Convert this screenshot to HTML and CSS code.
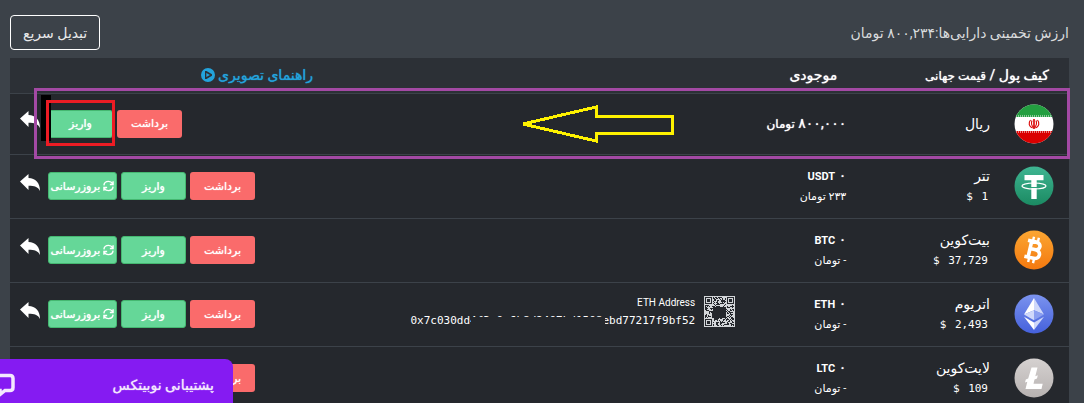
FILE: index.html
```html
<!DOCTYPE html>
<html lang="fa" dir="rtl">
<head>
    <meta charset="UTF-8">
    <meta name="viewport" content="width=device-width, initial-scale=1.0">
    <title>کیف پول</title>
    <link rel="stylesheet" href="styles.css">
</head>
<body>
    <!-- Shared icons -->
    <svg class="sprite" aria-hidden="true">
        <symbol id="reply" viewBox="0 0 20 17">
            <path d="M0 7.500 8.500 0v4C15.500 4.300 20 8.500 20 17c-2.200-4.200-5.500-5.200-11.500-5.200V16z"/>
        </symbol>
        <symbol id="refresh" viewBox="0 0 12 12">
            <path d="M1 5.300C1.300 2.700 3.300 1 6 1c2 0 3.500.8 4.600 2.500M11 .8v3.500H7.500M11 6.700C10.700 9.300 8.700 11 6 11c-2 0-3.500-.8-4.600-2.500M1 11.200V7.700h3.500" fill="none" stroke="currentColor" stroke-width="1.500"/>
        </symbol>
    </svg>

    <header class="topbar">
        <p class="estimate">ارزش تخمینی دارایی‌ها:۸۰۰,۲۳۴ تومان</p>
        <button class="convert" type="button">تبدیل سریع</button>
    </header>

    <main class="wallets">
        <table class="wallet-table">
            <colgroup>
                <col class="col-coin">
                <col class="col-balance">
                <col class="col-address">
                <col class="col-actions">
            </colgroup>
            <thead>
                <tr>
                    <th>کیف پول / <small>قیمت جهانی</small></th>
                    <th>موجودی</th>
                    <th></th>
                    <th>
                        <a class="guide" href="#">راهنمای تصویری
                            <svg class="play" viewBox="0 0 14 14"><path fill-rule="evenodd" d="M7 0a7 7 0 1 0 0 14A7 7 0 0 0 7 0zM4 3h1.500L11 6.200v1.600L5.500 11H4z"/><path d="M5.300 5v4L9 7z"/></svg>
                        </a>
                    </th>
                </tr>
            </thead>
            <tbody>
                <tr class="rial">
                    <td>
                        <div class="coin">
                            <svg class="coin-icon" viewBox="0 0 40 40">
                                <clipPath id="round"><circle cx="20" cy="20" r="19.500"/></clipPath>
                                <g clip-path="url(#round)">
                                    <path fill="#fff" d="M0 0h40v40H0z"/>
                                    <path fill="#239f40" d="M0 0h40v13H0z"/>
                                    <path fill="#da0000" d="M0 27h40v13H0z"/>
                                    <path stroke="#8ccb9b" stroke-width="2" stroke-dasharray="1 1" d="M0 12h40"/>
                                    <path stroke="#ea8080" stroke-width="2" stroke-dasharray="1 1" d="M0 28h40"/>
                                </g>
                                <path d="M20 15v10" stroke="#da0000" stroke-width="1.600"/>
                                <path d="M16.500 16c-2.500 3-1.500 6.500 2 8M23.500 16c2.500 3 1.500 6.500-2 8M18 16.500c-1 2.500-.5 5 1.500 7M22 16.500c1 2.500.5 5-1.500 7" fill="none" stroke="#da0000" stroke-width="1.100"/>
                            </svg>
                            <div class="name">ریال</div>
                        </div>
                    </td>
                    <td><div class="amount">۸۰۰,۰۰۰ <small>تومان</small></div></td>
                    <td></td>
                    <td>
                        <div class="actions">
                            <button class="btn withdraw" type="button">برداشت</button>
                            <button class="btn deposit" type="button">واریز</button>
                            <a class="reply" href="#" aria-label="بازگشت"><svg><use href="#reply"/></svg></a>
                        </div>
                    </td>
                </tr>
                <tr>
                    <td>
                        <div class="coin">
                            <svg class="coin-icon" viewBox="0 0 40 40">
                                <linearGradient id="g-usdt" x2="0" y2="1"><stop stop-color="#3fb592"/><stop offset="1" stop-color="#1b8a62"/></linearGradient>
                                <circle cx="20" cy="20" r="19.500" fill="url(#g-usdt)"/>
                                <path fill="#fff" d="M10.500 9h19v5.200h-6.800V33h-5.400V14.200h-6.800z"/>
                                <ellipse cx="20" cy="20" rx="12" ry="3" fill="none" stroke="#fff" stroke-width="1.200"/>
                                <path stroke="#2da47e" d="M17 21.500h6"/>
                            </svg>
                            <div>
                                <div class="name">تتر</div>
                                <div class="price">1 <span>$</span></div>
                            </div>
                        </div>
                    </td>
                    <td>
                        <div class="amount">۰ <b>USDT</b></div>
                        <div class="toman">۲۳۳ تومان</div>
                    </td>
                    <td></td>
                    <td>
                        <div class="actions">
                            <button class="btn withdraw" type="button">برداشت</button>
                            <button class="btn deposit" type="button">واریز</button>
                            <button class="btn update" type="button"><svg><use href="#refresh"/></svg>بروزرسانی</button>
                            <a class="reply" href="#" aria-label="بازگشت"><svg><use href="#reply"/></svg></a>
                        </div>
                    </td>
                </tr>
                <tr>
                    <td>
                        <div class="coin">
                            <svg class="coin-icon" viewBox="0 0 40 40">
                                <linearGradient id="g-btc" x2="0" y2="1"><stop stop-color="#fba632"/><stop offset="1" stop-color="#f4790f"/></linearGradient>
                                <circle cx="20" cy="20" r="19.500" fill="url(#g-btc)"/>
                                <g transform="rotate(13 20 20)" fill="none" stroke="#fff">
                                    <path stroke-width="3.600" d="M12 11.800h8.500c6 0 6 7.600 0 7.600H16h5.500c6.500 0 6.500 8.800 0 8.800H12M15.800 11v18"/>
                                    <path stroke-width="2.400" d="M17 7v4M22 7v4M17 29v4M22 29v4"/>
                                </g>
                            </svg>
                            <div>
                                <div class="name">بیت‌کوین</div>
                                <div class="price">37,729 <span>$</span></div>
                            </div>
                        </div>
                    </td>
                    <td>
                        <div class="amount">۰ <b>BTC</b></div>
                        <div class="toman">- تومان</div>
                    </td>
                    <td></td>
                    <td>
                        <div class="actions">
                            <button class="btn withdraw" type="button">برداشت</button>
                            <button class="btn deposit" type="button">واریز</button>
                            <button class="btn update" type="button"><svg><use href="#refresh"/></svg>بروزرسانی</button>
                            <a class="reply" href="#" aria-label="بازگشت"><svg><use href="#reply"/></svg></a>
                        </div>
                    </td>
                </tr>
                <tr>
                    <td>
                        <div class="coin">
                            <svg class="coin-icon" viewBox="0 0 40 40">
                                <linearGradient id="g-eth" x2="0" y2="1"><stop stop-color="#7b93ee"/><stop offset="1" stop-color="#4561dc"/></linearGradient>
                                <circle cx="20" cy="20" r="19.500" fill="url(#g-eth)"/>
                                <path fill="#fff" d="M20 4 10 20.500l10-4.300z"/>
                                <path fill="#cfd8fa" d="M20 4v12.200l10 4.300z"/>
                                <path fill="#cfd8fa" d="M20 16.200v10L10 20.500z"/>
                                <path fill="#8b9ff0" d="M20 16.200v10l10-5.700z"/>
                                <path fill="#fff" d="M10 22.800 20 36v-7.500z"/>
                                <path fill="#cfd8fa" d="M30 22.800 20 36v-7.500z"/>
                            </svg>
                            <div>
                                <div class="name">اتریوم</div>
                                <div class="price">2,493 <span>$</span></div>
                            </div>
                        </div>
                    </td>
                    <td>
                        <div class="amount">۰ <b>ETH</b></div>
                        <div class="toman">- تومان</div>
                    </td>
                    <td>
                        <div class="address">
                            <svg class="qr" id="qr" viewBox="0 0 31 31" shape-rendering="crispEdges"></svg>
                            <div class="address-text">
                                <div class="address-label">ETH Address</div>
                                <div class="hash">0x7c030dd4f3a0e6b8d2407bd1508ebd77217f9bf52<span class="eraser"></span></div>
                            </div>
                        </div>
                    </td>
                    <td>
                        <div class="actions">
                            <button class="btn withdraw" type="button">برداشت</button>
                            <button class="btn deposit" type="button">واریز</button>
                            <button class="btn update" type="button"><svg><use href="#refresh"/></svg>بروزرسانی</button>
                            <a class="reply" href="#" aria-label="بازگشت"><svg><use href="#reply"/></svg></a>
                        </div>
                    </td>
                </tr>
                <tr>
                    <td>
                        <div class="coin">
                            <svg class="coin-icon" viewBox="0 0 40 40">
                                <linearGradient id="g-ltc" x2="0" y2="1"><stop stop-color="#d5d1d0"/><stop offset="1" stop-color="#b7b2b1"/></linearGradient>
                                <circle cx="20" cy="20" r="19.500" fill="url(#g-ltc)"/>
                                <path fill="#fff" d="M17.500 9.500h6l-2.200 8.700 2.500-1-.8 3.200-2.500 1-1 4.400h9.200L27.500 31H11.500l1.800-7.300-2.300.9.800-3.200 2.400-1z"/>
                            </svg>
                            <div>
                                <div class="name">لایت‌کوین</div>
                                <div class="price">109 <span>$</span></div>
                            </div>
                        </div>
                    </td>
                    <td>
                        <div class="amount">۰ <b>LTC</b></div>
                        <div class="toman">- تومان</div>
                    </td>
                    <td></td>
                    <td>
                        <div class="actions">
                            <button class="btn withdraw" type="button">برداشت</button>
                            <button class="btn deposit" type="button">واریز</button>
                            <button class="btn update" type="button"><svg><use href="#refresh"/></svg>بروزرسانی</button>
                            <a class="reply" href="#" aria-label="بازگشت"><svg><use href="#reply"/></svg></a>
                        </div>
                    </td>
                </tr>
            </tbody>
        </table>

        <!-- Markers drawn over the rial row -->
        <div class="mark-row"></div>
        <div class="mark-black"></div>
        <div class="mark-deposit"></div>
        <svg class="mark-arrow" viewBox="0 0 154 38" shape-rendering="crispEdges"><path d="M3 19 76 2v9h76v17H76v8z" fill="none" stroke="#fff200" stroke-width="3"/></svg>
    </main>

    <button class="chat" type="button">
        <span>پشتیبانی نوبیتکس</span>
        <svg viewBox="0 0 26 24"><path d="M5 2.500h16q3 0 3 3v9q0 3-3 3h-5l-5 4v-4H5q-3 0-3-3v-9q0-3 3-3z" fill="none" stroke="currentColor" stroke-width="3.500"/></svg>
    </button>

    <script>
        // Draw the address QR code, one unit per module
        const qr = document.getElementById('qr');
        const corners = [[1, 1], [23, 1], [1, 23]];
        let path = '';
        let seed = 7;

        for (let y = 1; y < 30; y++) {
            for (let x = 1; x < 30; x++) {
                seed = (seed * 1103515245 + 12345) % 2147483648;
                let dark = (seed / 2147483648) < 0.45;
                if (Math.abs(x - 15) < 7 && Math.abs(y - 16) < 6) dark = true;
                for (const [cx, cy] of corners) {
                    const d = Math.max(Math.abs(x - cx - 3), Math.abs(y - cy - 3));
                    if (d <= 4) dark = d < 2 || d === 3;
                }
                if (dark) path += `M${x} ${y}h1v1h-1z`;
            }
        }
        qr.innerHTML = `<path fill="#d3d6d9" d="M0 0h31v31H0z"/><path fill="#25282d" d="${path}"/>`;
    </script>
</body>
</html>
```

FILE: styles.css
```css
:root {
    --page: #3c4249;
    --head: #2c3036;
    --row: #25282d;
    --line: #3c4249;
    --green: #65d798;
    --red: #fa6b6b;
}

* {
    box-sizing: border-box;
}

body {
    margin: 0;
    height: 100vh;
    overflow: hidden;
    padding: 15px 15px 0 10px;
    background-color: var(--page);
    color: #fff;
    font-family: Roboto, "DejaVu Sans", sans-serif;
    font-size: 14px;
}

button {
    font-family: inherit;
    cursor: pointer;
}

/* soft weight, the real bold is too wide for these labels */
th,
.amount,
.btn,
.chat {
    font-weight: normal;
    text-shadow: 0 0 1px currentColor;
}

.sprite {
    position: absolute;
    width: 0;
    height: 0;
}

.topbar {
    display: flex;
    justify-content: space-between;
    align-items: center;
    margin-bottom: 8px;
}

.estimate {
    margin: 0;
    color: #d9dbdd;
    font-size: 14px;
}

.convert {
    height: 35px;
    padding: 0 12px;
    border: 1px solid #fff;
    border-radius: 4px;
    background: none;
    color: #e8e9ea;
    font-size: 14px;
}

.wallets {
    position: relative;
}

.wallet-table {
    width: 100%;
    table-layout: fixed;
    border-collapse: collapse;
    background-color: var(--row);
}

.col-coin {
    width: 20%;
}

.col-balance {
    width: 111px;
}

.col-actions {
    width: 323px;
}

th {
    height: 35px;
    padding: 0 20px;
    background-color: var(--head);
    font-size: 14px;
    text-align: right;
    white-space: nowrap;
}

th small {
    font-size: 12px;
}

tr {
    border-bottom: 1px solid var(--line);
}

td {
    height: 64px;
    padding: 0 11px;
    white-space: nowrap;
}

.rial td {
    height: 61px;
}

td:first-child {
    padding-right: 15px;
}

.guide {
    display: inline-flex;
    align-items: center;
    gap: 3px;
    color: #23a3dc;
    text-decoration: none;
}

.play {
    width: 14px;
    height: 14px;
    fill: currentColor;
}

.coin {
    display: flex;
    align-items: center;
    gap: 24px;
}

.coin-icon {
    flex: none;
    width: 40px;
    height: 40px;
}

.name {
    font-size: 14px;
    line-height: 22px;
}

.price {
    padding-right: 2px;
    font-family: "DejaVu Sans Mono", monospace;
    font-size: 11px;
    line-height: 20px;
}

.price span {
    margin-right: 2px;
}

.amount {
    font-size: 14px;
    line-height: 20px;
}

.amount small {
    font-size: 12px;
}

.amount b {
    font-size: 11px;
    text-shadow: none;
}

.toman {
    font-size: 11px;
    line-height: 20px;
}

.address {
    display: flex;
    gap: 9px;
}

.qr {
    width: 31px;
    height: 31px;
}

.address-text {
    direction: ltr;
    text-align: right;
}

.address-label {
    font-size: 10px;
    line-height: 14px;
}

.hash {
    position: relative;
    font-family: "DejaVu Sans Mono", monospace;
    font-size: 11px;
    line-height: 22px;
}

/* hides the middle of the address */
.eraser {
    position: absolute;
    top: 7px;
    left: 61px;
    width: 134px;
    height: 14px;
    background-color: var(--row);
}

.actions {
    display: flex;
    justify-content: flex-end;
    align-items: center;
    gap: 4px;
}

td:last-child {
    padding-left: 10px;
}

.btn {
    width: 65px;
    height: 28px;
    padding: 0;
    border: 1px solid transparent;
    border-radius: 3px;
    color: #fff;
    font-size: 11px;
}

.withdraw {
    background-color: var(--red);
}

.deposit,
.update {
    border-color: #45b871;
    background-color: var(--green);
}

.update {
    display: flex;
    justify-content: center;
    align-items: center;
    gap: 3px;
    width: 69px;
}

.update svg {
    flex: none;
    width: 11px;
    height: 12px;
}

.reply {
    margin-right: 4px;
    padding-bottom: 8px;
}

.reply svg {
    display: block;
    width: 20px;
    height: 17px;
    fill: #fff;
}

.mark-row {
    position: absolute;
    top: 30px;
    right: -1px;
    left: 24px;
    height: 71px;
    border: 3px solid #a349a4;
}

.mark-black {
    position: absolute;
    top: 37px;
    left: 31px;
    width: 10px;
    height: 46px;
    background-color: #000;
}

.mark-deposit {
    position: absolute;
    top: 42px;
    left: 36px;
    width: 69px;
    height: 46px;
    border: 3px solid #ed1c24;
}

.mark-arrow {
    position: absolute;
    top: 47px;
    left: 510px;
    width: 154px;
    height: 38px;
}

.chat {
    position: fixed;
    bottom: 0;
    left: 0;
    display: flex;
    justify-content: space-between;
    align-items: center;
    width: 233px;
    height: 44px;
    padding: 8px 19px 0 0;
    border: 0;
    border-radius: 0 8px 0 0;
    background-color: #851bf2;
    color: #f3e8fe;
    font-size: 14px;
}

.chat svg {
    width: 26px;
    height: 24px;
    margin-left: -11px;
}
```
